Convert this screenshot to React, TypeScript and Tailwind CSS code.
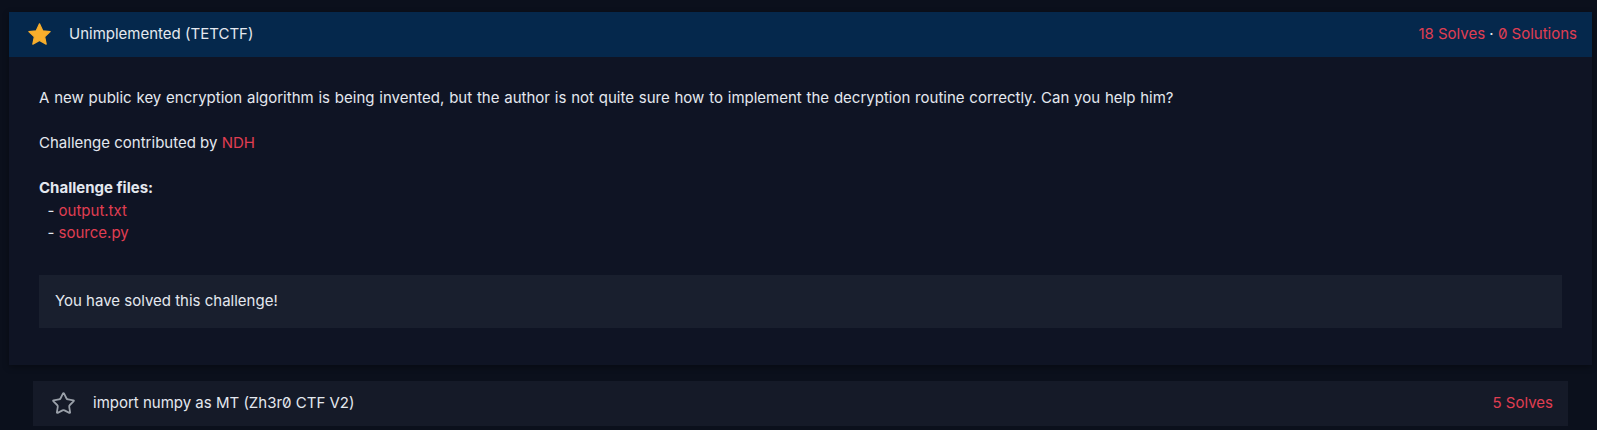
import { Star } from 'lucide-react';

const FONT = "font-['Inter','Noto_Sans',sans-serif]";

function SolvedStar() {
  return (
    <svg width="25" height="25" viewBox="0 0 24 24" className="shrink-0">
      <path
        d="M12 1.8l3.1 6.6 7.1.8-5.3 4.9 1.5 7.1L12 17.6l-6.4 3.6 1.5-7.1L1.8 9.2l7.1-.8z"
        fill="#f8ae2c"
        stroke="#f8ae2c"
        strokeWidth="1.2"
        strokeLinejoin="round"
      />
    </svg>
  );
}

export default function App() {
  return (
    <div className={`min-h-[430px] bg-[#0b101c] pt-[12px] pl-[9px] pr-[5px] text-[15px] slashed-zero ${FONT}`}>
      <div className="bg-[#0f1424] shadow-[0_2px_6px_rgba(0,0,0,0.35)]">
        <div className="h-[45px] bg-[#05284c] flex items-center pl-[18px] pr-[15px]">
          <SolvedStar />
          <span className="ml-[17px] text-[#e4e8ef]">Unimplemented (TETCTF)</span>
          <span className="ml-auto text-[#e03e52]">
            18 Solves <span className="text-[#e8eef5]">·</span> 0 Solutions
          </span>
        </div>

        <div className="px-[30px] pt-[30px] pb-[37px] text-[#e4e8ef] leading-[22.5px]">
          <p className="[word-spacing:0.6px]">
            A new public key encryption algorithm is being invented, but the author is not quite sure how to implement the decryption routine correctly. Can you help him?
          </p>
          <p className="mt-[22.5px]">
            Challenge contributed by <span className="text-[#e03e52]">NDH</span>
          </p>
          <div className="mt-[22.5px]">
            <p className="font-bold">Challenge files:</p>
            <p>&nbsp; - <span className="text-[#e03e52]">output.txt</span></p>
            <p>&nbsp; - <span className="text-[#e03e52]">source.py</span></p>
          </div>

          <div className="mt-[30px] h-[53px] bg-[#191f2e] flex items-center px-[16px]">
            You have solved this challenge!
          </div>
        </div>
      </div>

      <div className="mt-[16px] ml-[24px] mr-[24px] h-[45px] bg-[#151a28] flex items-center pl-[18px] pr-[15px] text-[#e4e8ef]">
        <Star size={25} strokeWidth={1.7} className="text-[#9aa0a9] shrink-0" />
        <span className="ml-[17px]">import numpy as MT (Zh3r0 CTF V2)</span>
        <span className="ml-auto text-[#e03e52]">5 Solves</span>
      </div>
    </div>
  );
}
